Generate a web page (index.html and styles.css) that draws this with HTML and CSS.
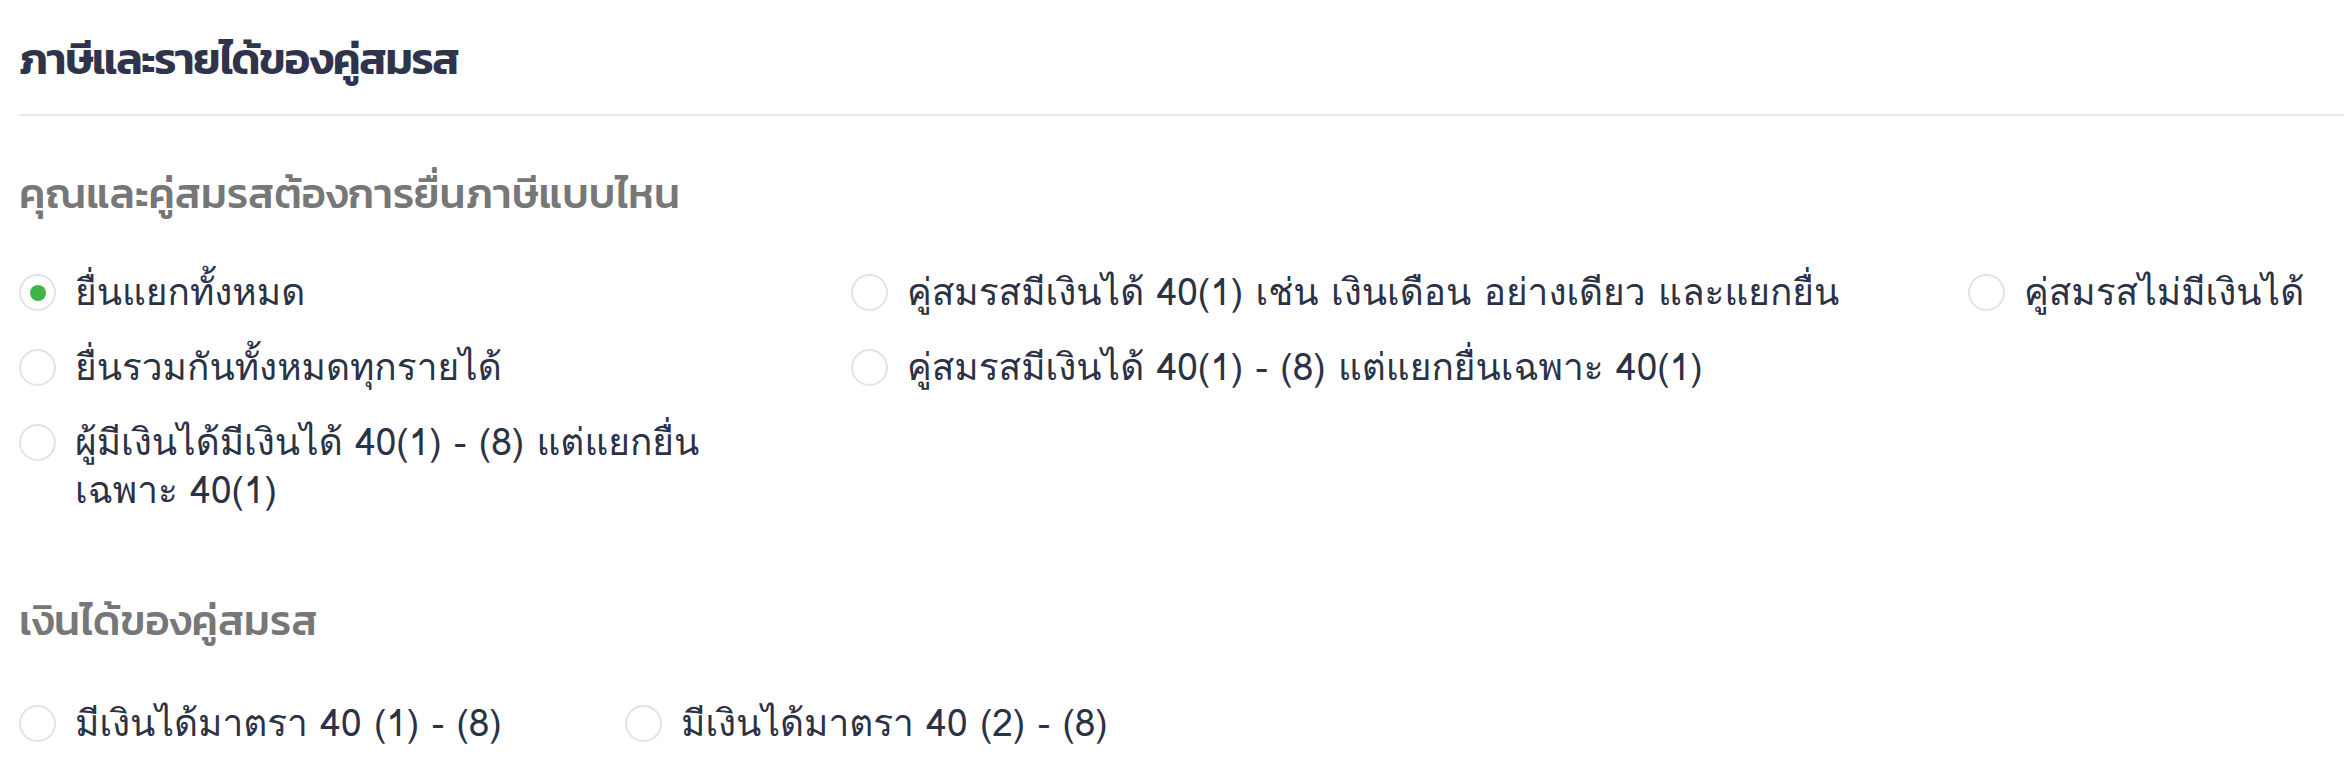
FILE: index.html
```html
<!DOCTYPE html>
<html lang="th">
<head>
<meta charset="utf-8">
<title>ภาษีและรายได้ของคู่สมรส</title>
<link rel="stylesheet" href="styles.css">
</head>
<body>
<main class="panel">
  <h1 class="title">ภาษีและรายได้ของคู่สมรส</h1>
  <section class="group">
    <h2 class="question">คุณและคู่สมรสต้องการยื่นภาษีแบบไหน</h2>
    <div class="options options-columns">
      <div class="col col-1">
        <label class="option"><span class="radio checked"></span><span class="opt-text">ยื่นแยกทั้งหมด</span></label>
        <label class="option"><span class="radio"></span><span class="opt-text">ยื่นรวมกันทั้งหมดทุกรายได้</span></label>
        <label class="option"><span class="radio"></span><span class="opt-text">ผู้มีเงินได้มีเงินได้ 40(1) - (8) แต่แยกยื่น<br>เฉพาะ 40(1)</span></label>
      </div>
      <div class="col col-2">
        <label class="option"><span class="radio"></span><span class="opt-text">คู่สมรสมีเงินได้ 40(1) เช่น เงินเดือน อย่างเดียว และแยกยื่น</span></label>
        <label class="option"><span class="radio"></span><span class="opt-text">คู่สมรสมีเงินได้ 40(1) - (8) แต่แยกยื่นเฉพาะ 40(1)</span></label>
      </div>
      <div class="col col-3">
        <label class="option"><span class="radio"></span><span class="opt-text">คู่สมรสไม่มีเงินได้</span></label>
      </div>
    </div>
  </section>
  <section class="group group-income">
    <h2 class="question">เงินได้ของคู่สมรส</h2>
    <div class="options options-two">
      <label class="option"><span class="radio"></span><span class="opt-text">มีเงินได้มาตรา 40 (1) - (8)</span></label>
      <label class="option"><span class="radio"></span><span class="opt-text">มีเงินได้มาตรา 40 (2) - (8)</span></label>
    </div>
  </section>
</main>
</body>
</html>
```
FILE: styles.css
```css
html, body {
  margin: 0;
  padding: 0;
  background: #ffffff;
}
.panel {
  padding-left: 19px;
  font-family: "Liberation Sans Narrow", "Loma", "Noto Sans", sans-serif;
  color: #2c3246;
}
.title {
  margin: 0;
  padding-top: 29px;
  padding-bottom: 25px;
  font-family: "Kanit", sans-serif;
  font-weight: 600;
  font-size: 44px;
  line-height: 60px;
  letter-spacing: -1.4px;
  color: #30344a;
  border-bottom: 2px solid #e6e8ee;
}
.question {
  margin: 0;
  font-family: "Kanit", sans-serif;
  font-weight: 500;
  font-size: 42px;
  line-height: 50px;
  letter-spacing: 0;
  color: #777777;
}
.group {
  padding-top: 53px;
}
.group-income {
  padding-top: 82px;
}
.options {
  margin-top: 49px;
}
.options-columns {
  display: flex;
}
.col {
  display: flex;
  flex-direction: column;
  gap: 27px;
}
.col-1 {
  width: 832px;
}
.col-2 {
  width: 1117px;
}
.col-3 {
  flex: 1;
}
.options-two {
  display: grid;
  grid-template-columns: 606px 1fr;
  margin-top: 53px;
}
.option {
  display: flex;
  align-items: flex-start;
  gap: 19px;
  font-size: 37px;
  line-height: 48px;
}
.radio {
  flex: none;
  box-sizing: border-box;
  width: 37px;
  height: 37px;
  margin-top: 6px;
  border: 2px solid #e3e3e3;
  border-radius: 50%;
  display: flex;
  align-items: center;
  justify-content: center;
  background: #fff;
}
.radio.checked::after {
  content: "";
  width: 16px;
  height: 16px;
  border-radius: 50%;
  background: #3db549;
}
```
